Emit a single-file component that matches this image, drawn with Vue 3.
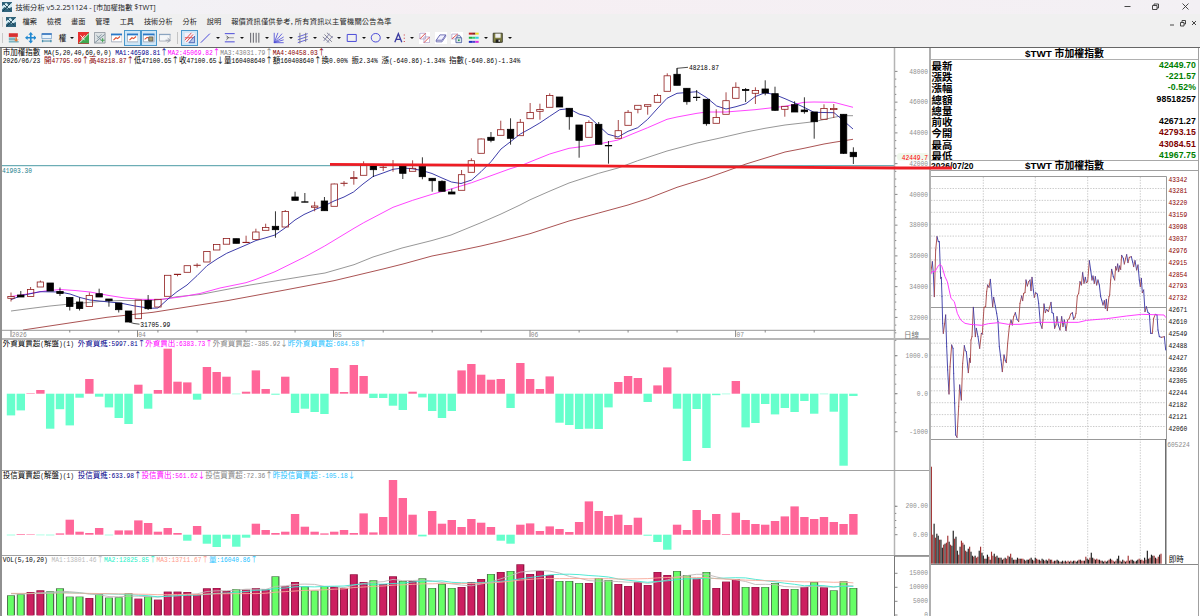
<script setup>
import { h } from 'vue'

// The indicator font is a fixed grid: latin takes one cell, CJK and arrows two.
const CELL = 3.75
const RUN = /[\u2190-\u21ff]|[\u2e80-\u9fff]+| +|[^\u2190-\u21ff\u2e80-\u9fff ]+/g

function runs(s, x, end) {
  const out = []
  let at = 0
  for (const t of s.match(RUN)) {
    const n = t.length * (/[\u2190-\u21ff\u2e80-\u9fff]/.test(t) ? 2 : 1)
    if (t.trim()) out.push({ t, at, n })
    at += n
  }
  const x0 = end ? x - at * CELL : x
  return out.map((r) => ({ t: r.t, x: x0 + r.at * CELL, w: r.n * CELL }))
}

const Mono = (props) =>
  h('g', { class: 'mono' }, runs(props.s, props.x, props.end).map((r) =>
    h('text', {
      x: r.x,
      y: props.y,
      textLength: r.w,
      lengthAdjust: 'spacingAndGlyphs',
      'font-family': /[\u2190-\u21ff]/.test(r.t) ? 'Noto Sans CJK TC' : null,
    }, r.t)))
Mono.props = ['s', 'x', 'y', 'end']

// Several coloured pieces of one header line, laid out one after another.
function line(x, y, parts) {
  let at = x
  return parts.map(([s, fill]) => {
    const item = { s, fill, x: at, y }
    for (const c of s) at += CELL * (/[\u2190-\u21ff\u2e80-\u9fff]/.test(c) ? 2 : 1)
    return item
  })
}

const NAVY = '#00008b'
const MAG = '#ff00ff'
const GRAY = '#858585'
const RED = '#8b0000'
const SKY = '#1cc2ff'

const priceHeader = [
  ...line(2.7, 55, [
    ['市加權指數 MA(5,20,40,60,0,0) ', '#000'],
    ['MA1:46598.81↑', NAVY], ['MA2:45069.82↑', MAG], ['MA3:43031.79↑', GRAY], ['MA4:40458.03↑', RED],
  ]),
  ...line(2.7, 63.4, [
    ['2026/06/23 ', '#000'], ['開47795.09↑', RED], ['高48218.87↑', RED],
    ['低47100.65↑收47100.65↓量160408640↑額160408640↑換0.00% 振2.34% 漲(-640.86)-1.34% 指數(-640.86)-1.34%', '#000'],
  ]),
]
const foreignHeader = line(2.7, 345.8, [
  ['外資買賣超(解盤)(1) ', '#000'], ['外資買進:5997.81↑', NAVY], ['外資賣出:6383.73↑', MAG],
  ['外資買賣超:-385.92↓', GRAY], ['昨外資買賣超:684.58↑', SKY],
])
const trustHeader = line(2.7, 477.6, [
  ['投信買賣超(解盤)(1) ', '#000'], ['投信買進:633.98↑', NAVY], ['投信賣出:561.62↓', MAG],
  ['投信買賣超:72.36↑', GRAY], ['昨投信買賣超:-105.18↓', SKY],
])
const volHeader = line(2.7, 561.8, [
  ['VOL(5,10,20) ', '#000'], ['MA1:13801.46↑', '#bbb'], ['MA2:12825.85↑', '#1cf0c8'],
  ['MA3:13711.67↑', '#ff9c8c'], ['量:16040.86↑', SKY],
])

const cx = (i) => 11 + i * 9.795

// up/down, high, body top, body bottom, low
const candles = [
  ['r', 292.5, 296.5, 298.3, 301.5], ['k', 291, 295, 297, 297], ['r', 287, 289.5, 296.5, 296.5], ['r', 280.5, 282, 287, 287],
  ['k', 283, 283, 291, 291], ['k', 287.5, 291.5, 293.5, 296], ['k', 297.5, 297.5, 306.5, 310.5], ['k', 297.5, 302, 308.5, 310.5],
  ['r', 292.5, 295.5, 306.5, 306.5], ['k', 288.7, 293.7, 297, 297], ['k', 299, 299, 300.7, 306.7], ['k', 303, 303, 309.7, 312.5],
  ['k', 311, 311, 322, 322], ['r', 300, 300, 318.7, 318.7], ['k', 295, 300.3, 308.7, 310], ['r', 299.3, 299.3, 307, 307],
  ['r', 275.3, 275.3, 296.3, 296.3], ['r', 274, 274.2, 274.6, 276.3], ['r', 265.7, 265.7, 272.3, 272.3], ['r', 263.3, 265.2, 265.5, 267.5],
  ['r', 251.5, 251.5, 262, 262], ['r', 244.5, 244.5, 250, 250], ['r', 238.5, 238.5, 244.2, 244.2], ['k', 238.7, 238.7, 243.3, 243.3],
  ['r', 235.7, 242.3, 242.6, 243], ['r', 228.7, 232, 239.5, 239.5], ['r', 223.7, 227.5, 230.3, 230.3], ['k', 211.3, 226.3, 229.7, 237.7],
  ['r', 210, 211.5, 227, 227], ['k', 191.7, 197, 200.3, 200.3], ['k', 193, 201.8, 202.2, 202.2], ['r', 201.7, 206, 207.3, 211.3],
  ['k', 197, 201, 210.7, 210.7], ['r', 183.5, 184, 206.3, 206.3], ['r', 181, 183.2, 183.5, 186.3], ['r', 171, 177.6, 178.6, 184.7],
  ['r', 161.3, 165.3, 175.3, 175.3], ['k', 165.3, 165.3, 169.7, 177], ['r', 166, 167.2, 167.5, 171], ['r', 160, 165, 165.6, 171.7],
  ['k', 166, 166, 173.3, 179], ['r', 160.3, 168.3, 171.3, 171.3], ['k', 157.3, 166.3, 176.7, 179.3], ['k', 178.3, 178.3, 180.7, 191.7],
  ['k', 180.3, 181.3, 191.3, 191.3], ['k', 188.7, 192, 194, 194], ['r', 170, 174.7, 190.3, 190.3], ['r', 158.3, 160.7, 172.3, 172.3],
  ['r', 138.5, 139, 153.3, 153.3], ['k', 132, 137.3, 140.3, 142.3], ['r', 120.7, 129.7, 135.3, 135.3], ['k', 118.3, 129.3, 138.3, 144.7],
  ['r', 119, 122.3, 135.7, 135.7], ['r', 103, 112.5, 118.7, 118.7], ['r', 103.7, 109.5, 111.3, 119.7], ['r', 93.3, 95.5, 107.3, 107.3],
  ['k', 97, 97, 107, 107], ['k', 108.3, 108.3, 116.7, 129.7], ['k', 125, 125, 140.3, 157.7], ['r', 120.3, 122.5, 137.3, 137.3],
  ['k', 122, 124.3, 144.3, 144.3], ['k', 141, 145.5, 145.9, 163.7], ['r', 120, 130.7, 138.3, 138.3], ['r', 110, 112.3, 125.3, 125.3],
  ['r', 105.3, 105.3, 109.3, 113.3], ['r', 104.7, 104.7, 106.3, 114.7], ['r', 93.7, 95.5, 102.3, 102.3], ['r', 73.3, 75.8, 91.3, 91.3],
  ['k', 68, 74.3, 85.3, 85.3], ['k', 88.3, 88.3, 101.7, 104.7], ['k', 90, 97.2, 97.6, 101], ['k', 99, 99.3, 123.7, 125.7],
  ['r', 109.3, 117.5, 123.3, 123.3], ['r', 92.3, 100.7, 114.3, 114.3], ['r', 82.3, 87.3, 98.3, 98.3], ['k', 88, 89.5, 90.5, 102],
  ['r', 87.3, 90.5, 93.3, 104], ['k', 80.3, 89, 93, 95.3], ['k', 86.7, 93.7, 110.3, 111], ['r', 106.3, 106.3, 109.3, 116.7],
  ['k', 101.3, 104.7, 112, 112], ['k', 97.3, 110, 111.7, 113.7], ['k', 112, 112, 121.7, 138.7], ['r', 104.3, 108.5, 119.3, 119.3],
  ['r', 104, 108.4, 109.6, 118], ['k', 114.3, 114.3, 153.3, 154], ['k', 147.3, 152.3, 156.7, 164],
]

const averages = [
  ['#8b8b8b', '11,311 30,308.5 50,306 70,304 100,301.5 120,300.5 150,300.5 165,299 177,296.7 200,294.5 220,290.7 250,285 275,281 304,276.3 325,273 354,264.7 373,257 402,248 432,240.5 451,235 481,222.7 501,214 520,205 530,199.8 550,191 569,183 598.7,173.3 618,168 637.7,160.7 667,151 697,143 717,138.7 746,132 765,128.3 785,125 814,121.7 834,117.3 843,115.7 853,115.7'],
  ['#a04040', '23,330 107,317.3 153,312.3 227,300.7 285,290 334,280.7 383,269 403,264 432,256 451,252.3 481,246 501,241.3 530,233.7 569,221 598.7,213 628,205 647.7,198.7 677,187.3 707,178 726,171.3 746,164 785,152 804,148.3 824,144 834,142.3 853,139.3'],
  ['#ff30ff', '11,296.5 21,295 30,293.5 45,291 60,289.5 75,290.5 90,292 109,295.5 125,298 140,299.3 160,299.5 180,297 200,293.5 220,288 246,282.7 256,279.3 275,271.7 304.7,257 324.7,246 354,228.3 363.7,222.7 393,207.3 412.7,200.3 432,194.3 451,189 471.7,182.7 491,175.7 510,168.8 523,164.8 533,160.7 549.7,154 569,148.3 579,147 598.7,144 618,140 633,133.7 647.7,127.7 667,119.3 677,117 697,113.3 707,112 726,112 755,109.7 785,106.3 804,102.3 814,102 834,102.3 843,104.7 853,107.3'],
  ['#2828a0', '11,299.7 21,295.7 40,291.7 60,292 70,294 80,297.5 90,300 109,302 120,303 135,306 150,308.3 158,308 168,299 177,291.7 187,285 197,275.7 207,265.7 217,259 226.7,253.3 246,245 256,240.5 265,238 275,235 285,228 295,220 304,214.5 314,210 325,205.5 334,201 344,197 353.5,192 363,184 373,176.5 383,173 393,169.3 403,168 412,168.7 422,170.5 432,173.5 442,178 451.5,182 461,183.5 471.7,180 481,171.7 491,161.7 501,149 511,141.3 520.3,134 530,128.7 539.7,123 549.7,116.3 559.7,109.7 569,108.7 579,114 589,116.7 598.7,125.7 608,134.3 618,137 628,131.3 637.7,127.7 647.7,119.3 657,109 667,98.3 677,93.3 687,92.5 697,91.7 706.7,97.7 716.7,106 726,109 736,106.7 746,103.7 755,96.7 765,92.7 775,94.7 785,98.7 794.7,103 804,107.3 814,112.3 834,112.7 843,120.3 853,129'],
]

// net buy (+) and sell (-), in pixels from the zero line
const foreign = [
  -21.7, -16.7, 0.5, 3.7, -35, -15.5, -31.7, -4, 14.7, -3, -13.7, -24.3, -30.3, 9, -15, 3.7, 45, 12, 11.3, -6,
  26.7, 21.7, 17, -0.5, 2, 23.3, 4.7, -1, 17, -19.3, -15, -18.3, -20.3, 25.7, 1.7, 28.7, 17.7, -4.3, -4.3, -12,
  -16.3, 2, -3.7, -17.3, -24.3, -17.3, 23.3, 29.7, 19, 14, 14.7, -14.3, 30.7, 14.7, 4.7, 17.3, -29, -31.3, -35.3, -35,
  -35.3, -13.7, 11.7, 17.7, 15.7, -8.3, 8.3, 26.3, -15, -67.3, -15.3, -54.3, -1.5, -0.5, 12.7, -33.7, -29.3, -10.3, -20.7, -14.3,
  -18.3, -7.3, -20, -0.5, -18, -72, -2.3,
]
const trust = [
  -0.6, 0.7, 0.5, -0.5, -0.6, 1.3, 15, 3, 1.7, 6.7, -0.6, 4.3, 4.3, 14.3, 11.7, 3, 6.7, 1.7, -6, 8.7,
  -9, -12.3, -4, -12, -3, 11, 4.7, 1.7, 3, 20.7, 8, 3, 1.3, 3, 4.7, 1.7, 21.3, 2.3, 17.7, 54.7,
  36.7, 20, -1.7, 23.7, 11, 14.7, 7.7, 15.7, 12, 7.7, -6, -9, 10, 11.3, 3.7, 8.3, 5.7, 2.7, 12.7, 33.3,
  23.7, 18.7, 20, 9.7, 17, -1, -7.3, -15, 10, 4.7, 24.7, 14.7, 20.7, 0.7, 22, 14.7, 10.7, 10, 13.7, 18.3,
  28.3, 17.7, 15.7, 17.7, 12.7, 10.7, 20.7,
]
const volume = [
  20, 21, 23.3, 25, 24, 27, 18.7, 18.7, 17.3, 21, 17.7, 18, 22, 16.7, 18.7, 15.7, 23.7, 23.7, 23.3, 21.3,
  27, 27.3, 24.3, 26.3, 25.7, 27.3, 26, 39, 29, 33.3, 28.7, 24.7, 29, 28.3, 27.3, 41, 33.3, 35, 31.3, 39,
  34.3, 34.3, 37, 27.3, 31.3, 27.3, 28.3, 33.3, 36.3, 41.3, 43.3, 44.3, 51, 41.3, 44.3, 40.3, 34.3, 34.3, 32.3, 32.3,
  37.3, 35.3, 31.3, 29.3, 33.3, 30.3, 43.3, 40.3, 44.3, 40.3, 36.7, 43.3, 27.3, 33.7, 36.3, 28.3, 28.3, 28.3, 32.3, 26.3,
  26.3, 28.3, 33.3, 28, 25, 34, 27.3,
]
const volumeSide = 'ggrrggggrggggrgrrrrrrrrgrrrgrrgggrrrrgrrgrggggrrrgrgrrrrgggrggrrrrrrggrgrrrgrggrgrgrggg'

const ZERO_F = 393.7
const ZERO_T = 534.7
const BASE = 615.3

function average(n) {
  return volume.map((_, i) => {
    let sum = 0
    for (let k = 0; k < n; k++) sum += i - k >= 0 ? volume[i - k] : 22
    return `${cx(i).toFixed(1)},${(BASE - sum / n).toFixed(1)}`
  }).join(' ')
}
const volumeLines = [['#c0b8b8', average(5)], ['#40e8d0', average(10)], ['#f8a898', average(20)]]

const priceScale = [48000, 46000, 44000, 42000, 40000, 38000, 36000, 34000, 32000].map((v, i) => ({ s: String(v), y: 71.4 + i * 30.75 }))
const foreignScale = [['1000.0', 355.7], ['0.0', 393.7], ['-1000', 431.7]]
const trustScale = [['200.00', 506.3], ['0.00', 534.7]]
const volScale = [['15000', 573.3], ['10000', 587.3], ['5000', 601.3], ['0', 615]]

const months = [['2026', 11], ['04', 137.5], ['05', 333.5], ['06', 530], ['07', 735.6]]
const weeks = [6, 11, 15, 19, 24, 29, 38, 43, 48, 58, 63, 68, 77, 82].map(cx)

const quote = [
  ['最新', '42449.70', 'down'], ['漲跌', '-221.57', 'down'], ['漲幅', '-0.52%', 'down'], ['總額', '98518257', ''], ['總量', '', ''],
  ['前收', '42671.27', ''], ['今開', '42793.15', 'up'], ['最高', '43084.51', 'up'], ['最低', '41967.75', 'down'],
]

const ladder = [
  43342, 43281, 43220, 43159, 43098, 43037, 42976, 42915, 42854, 42793, 42732, 42671, 42610, 42549, 42488, 42427, 42366, 42305, 42244, 42182, 42121, 42060,
]
const gridX = [983.3, 1035.3, 1087.7, 1140.3]

// Intraday ticks live in a 3x space so they can be kept as whole numbers.
const ticks = [
  31, 318, 37, 275, 40, 310, 43, 380, 47, 240, 51, 200, 55, 215, 58, 215, 62, 325, 64, 322, 66, 380, 68, 460, 70, 490, 74, 460, 77, 435, 80, 530,
  83, 600, 87, 672, 90, 590, 95, 525, 99, 535, 101, 610, 104, 700, 107, 795, 111, 802, 116, 710, 119, 645, 124, 690, 128, 580, 133, 527,
  136, 542, 139, 545, 145, 608, 149, 565, 151, 577, 153, 510, 156, 500, 160, 412, 166, 500, 169, 475, 174, 500, 179, 535, 184, 490, 187, 492,
  192, 412, 197, 410, 200, 365, 203, 345, 207, 352, 211, 328, 218, 410, 221, 382, 226, 408, 230, 430, 234, 455, 238, 530, 243, 570, 247, 605,
  252, 555, 256, 572, 259, 578, 263, 520, 268, 470, 273, 450, 277, 465, 281, 440, 286, 428, 291, 448, 296, 455, 300, 400, 305, 378, 308, 392,
  311, 370, 315, 368, 318, 330, 322, 348, 326, 335, 330, 330, 333, 362, 336, 322, 340, 360, 343, 382, 347, 368, 352, 372, 356, 400, 361, 460,
  366, 475, 369, 450, 372, 402, 376, 428, 380, 418, 385, 425, 389, 412, 393, 397, 396, 428, 400, 430, 404, 475, 408, 465, 411, 440, 415, 465,
  420, 480, 425, 440, 429, 470, 433, 450, 438, 482, 443, 450, 448, 445, 452, 432, 457, 428, 461, 448, 465, 442, 468, 430, 472, 378, 476, 370,
  480, 335, 484, 345, 488, 308, 492, 340, 496, 322, 499, 338, 503, 335, 508, 272, 512, 300, 516, 330, 519, 318, 523, 340, 526, 320, 530, 345,
  534, 330, 538, 345, 542, 380, 545, 390, 549, 405, 553, 392, 556, 415, 559, 388, 562, 422, 567, 380, 569, 375, 572, 330, 575, 298, 580, 320,
  584, 330, 587, 290, 590, 300, 593, 282, 596, 305, 599, 288, 602, 298, 605, 256, 610, 265, 613, 282, 617, 265, 620, 254, 624, 278, 628, 262,
  634, 260, 638, 276, 641, 290, 645, 272, 650, 300, 654, 285, 658, 330, 661, 350, 664, 325, 667, 368, 671, 360, 675, 425, 679, 410, 684, 428,
  688, 430, 692, 490, 697, 490, 701, 445, 706, 433, 711, 435, 714, 480, 718, 500, 724, 502, 733, 500, 737, 540,
]
const moves = []
for (let i = 2; i < ticks.length; i += 2) {
  const [x1, y1, x2, y2] = ticks.slice(i - 2, i + 2)
  moves.push({ x1, y1, x2, y2, up: y2 < y1 })
}

const turnover = [
  97, 29, 40, 26, 30, 28, 24, 24, 16, 19, 20, 21, 28, 22, 19, 18, 33, 25, 27, 13, 9, 17, 23, 21, 19, 13, 12, 15, 17, 12,
  8, 7, 8, 6, 7, 13, 17, 11, 8, 5, 5, 9, 7, 4, 12, 8, 10, 7, 8, 6, 6, 6, 4, 5, 6, 5, 8, 7, 10, 6,
  4, 4, 4, 6, 5, 5, 5, 5, 4, 3, 4, 4, 5, 6, 4, 3, 6, 5, 4, 4, 3, 5, 4, 3, 4, 3, 5, 4, 4, 2,
  3, 3, 4, 3, 2, 2, 3, 2, 3, 2, 3, 2, 3, 2, 3, 3, 2, 3, 4, 4, 3, 3, 3, 7, 5, 4, 6, 11, 6, 5,
  4, 5, 4, 4, 3, 3, 2, 3, 2, 3, 4, 5, 4, 3, 2, 3, 5, 8, 3, 2, 4, 3, 2, 3, 8, 3, 4, 4, 3, 2,
  3, 4, 5, 4, 4, 3, 6, 4, 13, 5, 6, 9, 8, 8, 6, 5, 7, 9, 10,
].map((n, i, all) => ({ n, x: 930.8 + i * (231 / all.length), up: i === 0 || (i * 37) % 11 < 5 }))

const menus = ['檔案', '檢視', '畫面', '管理', '工具', '技術分析', '分析', '說明']
const notice = '報價資訊僅供參考, 所有資訊以主管機關公告為準'

const BLUE = '#4a4ad8'
// Toolbar icons on a 14x14 grid; p is a list of [path, stroke, fill, width].
const tools = [
  { p: [['M1 1.500H12V6H1Z', 'none', '#d83030'], ['M1 7.500H9M1 9.500H9M1 12H13', '#3c94a8', 'none', 1.200], ['M9 6.500h2v2.500h2l-3 3-3-3h2z', 'none', '#e07838']] },
  { p: [['M7 0l2.800 3.200H8v2.800h2.800V4.200l3.200 2.800-3.200 2.800V8H8v2.800h1.800L7 14l-2.800-3.200H6V8H3.200v1.800L0 7l3.200-2.800V6H6V3.200H4.200z', 'none', '#2088d0']] },
  { p: [['M1 2H13V8H1Z', '#78a0c8', '#e8f4fc', 1], ['M1 2.500H13', '#3878c0', 'none', 2], ['M1 11H13M2 9.500V12.500M12 9.500V12.500', '#3c88a8', 'none', 1.200]] },
  { text: '權', menu: true },
  { p: [['M0 0H14V14H0Z', '#9c4030', '#40a850'], ['M0 0H14L0 14Z', 'none', '#e83030'], ['M2 13L13 2M3 4l5 6M8 4l-4 5', '#fff', 'none', 1.100]] },
  { p: [['M0.500 0.500H13.500V13.500H0.500Z', '#889098', '#dde2e4', 1], ['M1 13L13 3M3 4l6 6M9 3L4 8', '#8094a0', 'none', 1.200], ['M8 10h5M10.500 7.500V12.500', '#40a050', 'none', 1.200]] },
  { p: [['M0.500 3H13.500V12H0.500Z', '#9aa4b4', '#fff', 1], ['M0 3H14', '#2878c8', 'none', 2.200], ['M3 10l3-3 2 1 3-2.500', '#e05030', 'none', 1.300]] },
  { on: true, p: [['M0.500 3H13.500V12H0.500Z', '#9aa4b4', '#fff', 1], ['M0 3H14', '#2878c8', 'none', 2.200], ['M3 10l3-3 2 1 3-2.500', '#e05030', 'none', 1.300]] },
  { on: true, p: [['M0.500 3H13.500V12H0.500Z', '#9aa4b4', '#fff', 1], ['M0 3H14', '#2878c8', 'none', 2.200], ['M2 9l3-2.500 2 1', '#e05030', 'none', 1.300], ['M7 6H12V11H7Z', '#555', '#a8a070', 1]] },
  { p: [['M0.500 3H13.500V11H0.500Z', '#a0a8b4', '#f4f6f8', 1], ['M0 3H14', '#8aa4c0', 'none', 1.500], ['M8 10h5M10.500 7.500L13.500 10l-3 3', '#98a0ac', 'none', 1.200]] },
  { sep: true },
  { on: true, p: [['M1 1H13V13H1Z', 'none', '#f4f0f8'], ['M1 10L9 1M3 12L11 3M1 7h10', '#e05050', 'none', 1.200], ['M6 13L13 5V13Z', '#3858b0', '#b8c4e8', 1]] },
  { menu: true, p: [['M1 13L12 2', BLUE, 'none', 1.200]] },
  { menu: true, p: [['M1 2H13M1 12H13', BLUE, 'none', 1.200], ['M3 7H12', '#888', 'none', 1], ['M3 4.500l2.500 2.500-2.500 2.500', '#444', 'none', 1]] },
  { menu: true, p: [['M2 1V13M5.300 1V13M8.700 1V13M12 1V13', '#606068', 'none', 1.200]] },
  { menu: true, p: [['M1.500 13V1M1.500 13L6 1M1.500 13L11 2M1.500 13L13 6M1.500 13L13 9.500M1.500 13H13', BLUE, 'none', 1]] },
  { menu: true, p: [['M1 6L13 2M1 9.500L13 5.500M1 13L13 9', BLUE, 'none', 1], ['M3.500 1V14M10.500 1V12', '#707078', 'none', 1]] },
  { menu: true, p: [['M1 6L9 13M3 3L12 12M6 1L13 7', '#707080', 'none', 1], ['M2 11L9 2M6 13L13 5', '#7878a8', 'none', 1]] },
  { menu: true, p: [['M1.500 3H12.500V11.500H1.500Z', BLUE, 'none', 1.200]] },
  { menu: true, p: [['M7 1.800C14.300 1.800 14.300 12.200 7 12.200S-0.300 1.800 7 1.800Z', BLUE, 'none', 1.200]] },
  { menu: true, p: [['M1 12.500L5.300 2L9.500 12.500M2.500 9H8', '#3a3aa0', 'none', 1.600], ['M12.500 3v1.200M12.500 7v1.200M12.500 11v1.200', '#d04040', 'none', 1.300]] },
  { white: true, p: [['M1 1.500H8V8.500H1ZM6 6H13V13H6Z', '#b0a0c8', 'none', 1], ['M1 8.500L8 1.500M6 13L13 6', '#e05050', 'none', 1.200]] },
  { white: true, p: [['M1.500 10L6 3.500H13L8.500 10Z', '#5858a8', '#f0f0ff', 1], ['M1.500 10v2H8.500L13 5.500V3.500', '#5858a8', 'none', 1]] },
  { white: true, p: [['M1 2.500H8V8.500H1Z', '#b0a0c8', 'none', 1], ['M1 8.500L8 2.500', '#e05050', 'none', 1.200], ['M6 7H13V13H6ZM7 7C7 3 12 3 12 7', '#4858a0', '#d8e8e8', 1], ['M8.500 9h2v2h-2z', 'none', '#309850']] },
  { menu: true, p: [['M1 2H5', '#c02020', 'none', 2.400], ['M5 2H9', '#902020', 'none', 2.400], ['M9 2H13', '#f0e020', 'none', 2.400], ['M1 7H5', '#20b040', 'none', 2.400], ['M5 7H9', '#30d070', 'none', 2.400], ['M9 7H13', '#30d0e0', 'none', 2.400], ['M1 12H5', '#2030c0', 'none', 2.400], ['M5 12H9', '#5040d0', 'none', 2.400], ['M9 12H13', '#e030e0', 'none', 2.400]] },
  { menu: true, p: [['M1.500 1.500H12.500V12.500H1.500Z', '#404030', '#808040', 1.200], ['M4 2H10.500V7H4Z', 'none', '#f0f0f0'], ['M4.500 9H10V13H4.500Z', 'none', '#202020'], ['M8 9.500h1.500v2.500H8z', 'none', '#fff']] },
]
</script>

<template>
  <div class="window">
    <header class="titlebar">
      <svg class="logo" viewBox="0 0 12 12">
        <rect width="12" height="12" fill="#30647c" />
        <path d="M0 5L5 1 8 4 12 1V6L7 8 3 6 0 9Z" fill="#d4ecf4" />
        <path d="M1 11L10 2M2 2L10 10" stroke="#10384c" fill="none" />
      </svg>
      <span class="title">技術分析 v5.2.251124 - [市加權指數 $TWT]</span>
      <svg class="controls" viewBox="0 0 76 14">
        <path d="M0.500 6.500H6.500" />
        <path d="M28.500 5.500H33V9.500H28.500ZM30 5.500V4H34.500V8H33" />
        <path d="M58.500 3.500L64.500 9.500M64.500 3.500L58.500 9.500" />
      </svg>
    </header>

    <nav class="menubar">
      <i class="grip"></i>
      <svg class="logo" viewBox="0 0 12 12">
        <rect width="12" height="12" fill="#30647c" />
        <path d="M0 5L5 1 8 4 12 1V6L7 8 3 6 0 9Z" fill="#d4ecf4" />
        <path d="M1 11L10 2M2 2L10 10" stroke="#10384c" fill="none" />
      </svg>
      <span v-for="m in menus" :key="m" class="menu">{{ m }}</span>
      <span class="menu notice">{{ notice }}</span>
      <svg class="mdi" viewBox="0 0 32 14">
        <path d="M2 10H6" />
        <path d="M12.500 7.500H16V11H12.500ZM14 7.500V5.500H17.500V9H16" />
        <path d="M24 6L28 10M28 6L24 10" />
      </svg>
    </nav>

    <div class="toolbar">
      <i class="grip"></i>
      <template v-for="(t, i) in tools" :key="i">
        <i v-if="t.sep" class="sep"></i>
        <span v-else class="tool" :class="{ on: t.on, lettered: t.text }">
          <b v-if="t.text">{{ t.text }}</b>
          <svg v-else :class="{ white: t.white }" viewBox="0 0 14 14">
            <path v-for="(p, k) in t.p" :key="k" :d="p[0]" :stroke="p[1]" :fill="p[2]" :stroke-width="p[3] || 1" />
          </svg>
        </span>
        <i v-if="t.menu" class="drop"></i>
      </template>
    </div>

    <main class="workspace">
      <section class="charts">
        <div class="pane price">
          <svg class="plot" viewBox="2 48 892 290" width="892" height="290">
            <path d="M2 165.700H894" stroke="#4a9aa4" />
            <polyline v-for="a in averages" :key="a[0]" :points="a[1]" :stroke="a[0]" fill="none" stroke-width="0.9" />
            <g v-for="(c, i) in candles" :key="i" :class="c[0] === 'r' ? 'rise' : 'fall'">
              <path v-if="c[0] === 'k'" :d="`M${cx(i)} ${c[1]}V${c[4]}`" />
              <path v-else :d="`M${cx(i)} ${c[1]}V${c[2]}M${cx(i)} ${c[3]}V${c[4]}`" />
              <rect :x="cx(i) - 3.2" :y="c[2]" width="6.4" :height="c[3] - c[2]" />
            </g>
            <path d="M677 74V68.300L688 67.300M129 322L134 323.500L139.500 324.200" stroke="#222" fill="none" stroke-width="0.8" />
            <Mono s="48218.87" :x="689" :y="70" fill="#000" />
            <Mono s="31705.99" :x="140.3" :y="326.600" fill="#000" />
            <Mono s="41903.30" :x="2" :y="172.500" fill="#1c808c" />
            <path d="M2 330.300H894" stroke="#999" />
            <path v-for="w in weeks" :key="w" :d="`M${w} 330V332.500`" stroke="#888" />
            <g v-for="m in months" :key="m[0]">
              <path :d="`M${m[1]} 330V337`" stroke="#888" />
              <Mono :s="m[0]" :x="m[1] + 0.8" :y="337.300" fill="#8a8a8a" />
            </g>
            <Mono v-for="p in priceHeader" :key="p.s + p.x" v-bind="p" />
          </svg>
          <svg class="axis" viewBox="894 48 35 290" width="35" height="290">
            <path d="M894.500 48V338" class="rule" />
            <path d="M894 330.300H896" stroke="#999" />
            <g v-for="p in priceScale" :key="p.s">
              <path :d="`M895 ${p.y}h2.500M895 ${p.y + 7.700}h1.300M895 ${p.y + 15.400}h1.300M895 ${p.y + 23}h1.300`" stroke="#888" />
              <Mono :s="p.s" :x="928" :y="p.y + 2.300" end="1" fill="#8f8f8f" />
            </g>
            <rect x="897" y="153" width="32" height="7.500" rx="3" fill="#f0f8ec" />
            <Mono s="42449.7" :x="928" :y="159.600" end="1" fill="#ff0000" />
            <rect x="900" y="331" width="26" height="7" fill="#fff" />
            <Mono s="日線" :x="904" :y="337.600" fill="#777" />
          </svg>
        </div>

        <div class="pane foreign">
          <svg class="plot" viewBox="2 340 892 130" width="892" height="130">
            <rect v-for="(v, i) in foreign" :key="i" :x="cx(i) - 4.2" :y="v > 0 ? ZERO_F - v : ZERO_F" width="8.400" :height="Math.abs(v)" :class="v > 0 ? 'buy' : 'sell'" />
            <Mono v-for="p in foreignHeader" :key="p.s" v-bind="p" />
          </svg>
          <svg class="axis" viewBox="894 340 35 130" width="35" height="130">
            <path d="M894.500 340V470" class="rule" />
            <path v-for="n in 8" :key="n" :d="`M895 ${355.700 + (n - 1) * 9.500}h1.300`" stroke="#888" />
            <g v-for="p in foreignScale" :key="p[0]">
              <path :d="`M895 ${p[1]}h2.500`" stroke="#888" />
              <Mono :s="p[0]" :x="928" :y="p[1] + 2" end="1" fill="#8f8f8f" />
            </g>
          </svg>
        </div>

        <div class="pane trust">
          <svg class="plot" viewBox="2 471 892 84" width="892" height="84">
            <rect v-for="(v, i) in trust" :key="i" :x="cx(i) - 4.2" :y="v > 0 ? ZERO_T - v : ZERO_T" width="8.400" :height="Math.abs(v)" :class="v > 0 ? 'buy' : 'sell'" />
            <Mono v-for="p in trustHeader" :key="p.s" v-bind="p" />
          </svg>
          <svg class="axis" viewBox="894 471 35 84" width="35" height="84">
            <path d="M894.500 471V555" class="rule" />
            <path v-for="n in 4" :key="n" :d="`M895 ${506.300 + (n - 1) * 7.100}h1.300`" stroke="#888" />
            <g v-for="p in trustScale" :key="p[0]">
              <path :d="`M895 ${p[1]}h2.500`" stroke="#888" />
              <Mono :s="p[0]" :x="928" :y="p[1] + 2" end="1" fill="#8f8f8f" />
            </g>
          </svg>
        </div>

        <div class="pane volume">
          <svg class="plot" viewBox="2 556 892 60" width="892" height="60">
            <g v-for="(v, i) in volume" :key="i" :class="volumeSide[i] === 'g' ? 'vol-g' : 'vol-r'">
              <rect class="edge" :x="cx(i) - 4" :y="BASE - v" width="8" :height="v" />
              <rect :x="cx(i) - 3.1" :y="BASE - v + 0.5" width="5.900" :height="v - 0.5" />
            </g>
            <polyline v-for="a in volumeLines" :key="a[0]" :points="a[1]" :stroke="a[0]" fill="none" stroke-width="0.9" />
            <Mono v-for="p in volHeader" :key="p.s" v-bind="p" />
          </svg>
          <svg class="axis" viewBox="894 556 35 60" width="35" height="60">
            <path d="M894.500 556V616M894 556.200H929" stroke="#777" fill="none" />
            <g v-for="p in volScale" :key="p[0]">
              <path :d="`M895 ${p[1]}h2.500`" stroke="#888" />
              <Mono :s="p[0]" :x="928" :y="p[1] + 2" end="1" fill="#8f8f8f" />
            </g>
          </svg>
        </div>
      </section>

      <aside class="side">
        <h2 class="symbol">$TWT 市加權指數</h2>
        <dl class="quote">
          <div v-for="q in quote" :key="q[0]" class="quote-row">
            <dt>{{ q[0] }}</dt>
            <dd :class="q[2]">{{ q[1] }}</dd>
          </div>
        </dl>
        <h2 class="symbol dated"><span>2026/07/20</span>$TWT 市加權指數<span></span></h2>
        <svg class="intraday" viewBox="931 171 267 393" width="267" height="393">
          <g stroke="#bdbdbd" stroke-dasharray="1.400 1.300" stroke-width="0.8">
            <path v-for="n in 21" :key="n" :d="`M931 ${176.600 + n * 11.900}H1166`" />
            <path v-for="x in gridX" :key="x" :d="`M${x} 177V563`" />
          </g>
          <path d="M931 176.500H1166.500V439.500M931 439.500H1166M931 307.500H1166" stroke="#999" fill="none" />
          <path d="M1165.800 439V564" stroke="#555" stroke-width="1.300" />
          <g transform="translate(920 170) scale(0.33333)" stroke-width="2.800" stroke-linecap="round">
            <line v-for="(m, i) in moves" :key="i" :x1="m.x1" :y1="m.y1" :x2="m.x2" :y2="m.y2" :stroke="m.up ? '#a84848' : '#3c3ca8'" />
            <polyline points="31,315 36,305 45,305 55,287 61,283 66,290 75,320 82,335 93,385 103,395 112,430 122,450 135,460 150,463 185,466 205,461 235,458 265,463 300,463 355,457 475,457 500,451 560,446 620,438 665,433 732,435 737,442" stroke="#ff30ff" fill="none" />
          </g>
          <Mono v-for="(v, i) in ladder" :key="v" :s="String(v)" :x="1168.500" :y="181.600 + i * 11.870" :fill="i < 11 ? '#8b0000' : '#111'" />
          <Mono s="605224" :x="1167.300" :y="446.800" fill="#8a8a8a" />
          <rect v-for="(b, i) in turnover" :key="i" :x="b.x" :y="563.700 - b.n" width="1.150" :height="b.n" :fill="b.up ? '#a03030' : '#1c1c1c'" />
          <Mono s="即時" :x="1168.800" :y="562" fill="#000" />
        </svg>
      </aside>

      <svg class="drawing" viewBox="0 48 1200 568">
        <path d="M330 164.400L520 165.400L680 166.600L900 168L952 168" stroke="#ee1c24" stroke-width="2.900" fill="none" />
      </svg>
    </main>
  </div>
</template>

<style>
html, body { margin: 0; overflow: hidden; }
</style>

<style scoped>
.window {
  display: flex;
  flex-direction: column;
  width: 1200px;
  height: 616px;
  background: #fff;
  font-family: "Noto Sans CJK TC", sans-serif;
  color: #222;
  overflow: hidden;
}
svg { display: block; flex-shrink: 0; }

.titlebar {
  display: flex;
  align-items: center;
  height: 14px;
  padding-left: 1.500px;
  background: linear-gradient(90deg, #f0f2f6, #f6eff3 40%, #f3f0f4);
}
.logo { width: 10px; height: 10px; }
.title {
  flex: 1;
  margin-left: 4px;
  font-family: "Open Sans", "Noto Sans CJK TC", sans-serif;
  font-size: 7.300px;
  line-height: 14px;
  white-space: nowrap;
}
.controls { width: 76px; height: 14px; }
.controls path, .mdi path { fill: none; stroke: #333; stroke-width: 0.9; }

.menubar {
  display: flex;
  align-items: center;
  height: 15px;
  background: #f0f0f0;
}
.grip {
  width: 1px;
  height: 10px;
  margin: 0 3px 0 2px;
  background: #c8c8c8;
}
.menubar .logo { margin-right: 6.500px; }
.menu {
  margin-right: 9.900px;
  font-size: 7.200px;
  line-height: 15px;
  white-space: nowrap;
}
.notice { margin-right: 0; letter-spacing: 0.26px; }
.mdi { width: 32px; height: 14px; margin-left: auto; }

.toolbar {
  display: flex;
  align-items: center;
  height: 18px;
  background: #f0f0f0;
}
.tool {
  display: flex;
  align-items: center;
  justify-content: center;
  box-sizing: border-box;
  width: 16.300px;
  height: 16.600px;
}
.tool svg { width: 11.500px; height: 11.500px; }
.tool svg.white { background: #fff; }
.tool.on { border: 1px solid #4a98cc; background: #cfe6f6; }
.tool.lettered { width: 10px; margin-left: 2.700px; }
.tool b { font-size: 7.500px; line-height: 12px; font-weight: 500; }
.drop {
  width: 0;
  margin: 0 2px;
  border: 2px solid transparent;
  border-top-color: #111;
  border-bottom: 0;
}
.sep { width: 1px; height: 12px; margin: 0 3.500px; background: #c4c4c4; }

.workspace {
  position: relative;
  display: flex;
  height: 568px;
  border-top: 1px solid #666;
}
.charts {
  box-sizing: border-box;
  width: 929px;
  border-left: 2px solid #909090;
}
.pane { display: flex; }
.price { border-bottom: 2px solid #b8b8b8; }
.foreign, .trust { border-bottom: 1px solid #a0a0a0; }
.rule { stroke: #b4b4b4; stroke-width: 1.500; }
.axis { overflow: visible; }

.mono {
  font-family: "Liberation Mono", "Noto Sans CJK TC", monospace;
  font-size: 8px;
}
.rise path, .rise rect { fill: #fff; stroke: #8f1c1c; stroke-width: 0.8; }
.rise rect { fill-opacity: 0; }
.fall path, .fall rect { fill: #000; stroke: #000; stroke-width: 0.8; }
.buy { fill: #ff6699; }
.sell { fill: #66ffcc; }
.vol-g rect { fill: #66ff66; }
.vol-g .edge { fill: #4c6a4c; }
.vol-r rect { fill: #cc1f60; }
.vol-r .edge { fill: #8c1440; }

.side {
  display: flex;
  flex-direction: column;
  box-sizing: border-box;
  width: 270px;
  border-left: 2px solid #b0b0b0;
  border-right: 1px solid #a0a0a0;
}
.symbol {
  height: 11px;
  margin: 0;
  border-bottom: 1px solid #b0b0b0;
  font-family: "Liberation Sans", "Noto Sans CJK TC", sans-serif;
  font-size: 9.900px;
  font-weight: 700;
  line-height: 12px;
  text-align: center;
  color: #000;
}
.dated {
  display: grid;
  grid-template-columns: 1fr auto 1fr;
  height: 9px;
  border-top: 1px solid #a8a8a8;
  border-bottom: 1px solid #a0a0a0;
  line-height: 10px;
}
.dated span { font-size: 8.500px; text-align: left; }
.quote { height: 100px; margin: 0; }
.quote-row {
  display: flex;
  justify-content: space-between;
  height: 11.220px;
  padding: 0 2px 0 0.5px;
  font-weight: 700;
  line-height: 11px;
  color: #000;
}
.quote dt { font-size: 10.400px; }
.quote dd {
  margin: 0;
  font-family: "Liberation Sans", sans-serif;
  font-size: 8.700px;
  letter-spacing: 0.1px;
}
.quote dd.down { color: #008000; }
.quote dd.up { color: #800000; }
.intraday { border-bottom: 1px solid #888; }

.drawing {
  position: absolute;
  left: 0;
  top: 0;
  width: 1200px;
  height: 568px;
  pointer-events: none;
}
</style>
